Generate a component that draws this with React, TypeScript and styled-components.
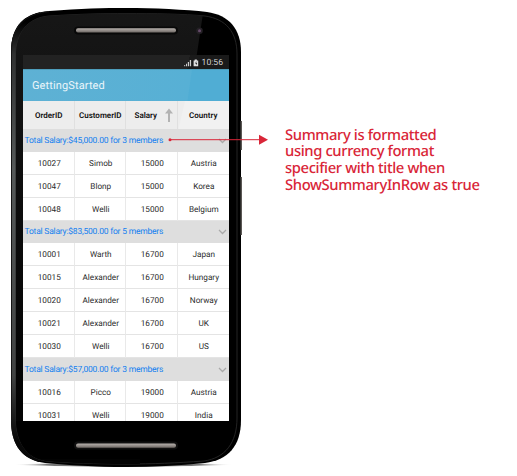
import React from "react";
import styled, { createGlobalStyle } from "styled-components";

const GlobalStyle = createGlobalStyle`
  * { box-sizing: border-box; }
  body { margin: 0; background: #fff; }
`;

const Page = styled.main`
  display: grid;
  grid-template-columns: 250px 1fr;
  width: 517px;
  height: 476px;
  overflow: hidden;
  background: #fff;
  position: relative;
  font-family: Roboto, "Liberation Sans", sans-serif;
  text-rendering: geometricPrecision;
`;

const Phone = styled.section`
  display: grid;
  height: 476px;
  & > * { grid-area: 1 / 1; }
`;

const Drawing = styled.svg`
  display: block;
  width: 250px;
  height: 476px;
`;

const Screen = styled.div`
  display: flex;
  flex-direction: column;
  width: 206px;
  height: 366px;
  margin: 55px 0 0 23px;
  overflow: hidden;
  background: #fff;
  z-index: 1;
`;

const StatusBar = styled.div`
  display: flex;
  flex: none;
  align-items: center;
  justify-content: flex-end;
  height: 14px;
  padding: 1px 6px 0 0;
  background: linear-gradient(100deg, #222 80%, #1a1a1a 80%);
  color: #d0d0d0;
  font-size: 8.6px;
  line-height: 14px;
`;

const StatusIcons = styled.svg`
  width: 15px;
  height: 8px;
  margin-right: 3px;
`;

const AppBar = styled.header`
  flex: none;
  height: 32px;
  padding-left: 9px;
  border-top: 1px solid #4d9dbb;
  background: linear-gradient(98deg, #5eb1d4 0%, #57b0d5 80%, #50add4 80.5%);
  color: #eaf5fa;
  font-size: 11px;
  letter-spacing: 0.12px;
  line-height: 31px;
`;

const HeaderRow = styled.div`
  display: grid;
  flex: none;
  grid-template-columns: repeat(4, 51.5px);
  height: 28px;
  background: linear-gradient(103deg, #ededed 76%, #f1f1f1 76.5%);
`;

const HeaderCell = styled.div<{ $sorted?: boolean }>`
  display: flex;
  align-items: center;
  justify-content: center;
  gap: 8px;
  padding-left: ${(p) => (p.$sorted ? "5px" : "1px")};
  border-right: 1px solid #e0e0e0;
  color: #111;
  font-size: 8px;
  font-weight: 600;
  &:last-child { border-right: 0; padding: 0; }
`;

const SortIcon = styled.svg`
  flex: none;
  width: 8px;
  height: 15px;
`;

const GroupRow = styled.div`
  display: flex;
  flex: none;
  align-items: center;
  justify-content: space-between;
  height: 22.9px;
  padding: 0.5px 2px 0 1.5px;
  background: #dedede;
  color: #147ff0;
  font-size: 8.5px;
  letter-spacing: -0.21px;
  white-space: nowrap;
`;

const Chevron = styled.svg`
  width: 9px;
  height: 6px;
`;

const DataRow = styled.div`
  display: grid;
  flex: none;
  grid-template-columns: repeat(4, 51.5px);
  height: 22.9px;
`;

const Cell = styled.div`
  display: flex;
  align-items: center;
  justify-content: center;
  padding: 2px 0 0 2px;
  border-right: 1px solid #e9e9e9;
  border-bottom: 1px solid #e4e4e4;
  color: #2b2b2b;
  font-size: 8.2px;
  &:last-child { padding-left: 1px; border-right: 0; }
`;

const Note = styled.aside`
  padding: 126.5px 0 0 35px;
  color: #d92638;
  font-family: "Noto Sans", "Open Sans", sans-serif;
  font-size: 14.8px;
  font-weight: 500;
  line-height: 16.67px;
  letter-spacing: -0.38px;
  white-space: nowrap;
`;

const Arrow = styled.svg`
  position: absolute;
  top: 134px;
  left: 166px;
  z-index: 2;
  width: 104px;
  height: 12px;
`;

const groups = [
  {
    total: "$45,000.00", members: 3,
    rows: [["10027", "Simob", "15000", "Austria"], ["10047", "Blonp", "15000", "Korea"], ["10048", "Welli", "15000", "Belgium"]],
  },
  {
    total: "$83,500.00", members: 5,
    rows: [["10001", "Warth", "16700", "Japan"], ["10015", "Alexander", "16700", "Hungary"], ["10020", "Alexander", "16700", "Norway"], ["10021", "Alexander", "16700", "UK"], ["10030", "Welli", "16700", "US"]],
  },
  {
    total: "$57,000.00", members: 3,
    rows: [["10016", "Picco", "19000", "Austria"], ["10031", "Welli", "19000", "India"]],
  },
];

const note = [
  "Summary is formatted",
  "using currency format",
  "specifier with title when",
  "ShowSummaryInRow as true",
];

const body = "M11 52 C11 25 25 13 49 11 C80 8.5 105 8 126 8 C153 8 186 9.5 207 12 C229 15 241 29 241 52 L241 420 C241 446 228 460 205 463 C178 465.5 153 467 126 467 C96 467 68 465 45 463 C22 460 11 445 11 420 Z";
const face = "M16 56 C16 33 27 18 49 16 C80 14 104 13.5 126 13.5 C153 13.5 184 14 205 16 C226 19 237 32 237 54 L237 418 C237 443 225 458 204 461 C176 463 153 464 126 464 C96 464 69 463 46 461 C27 458 16 443 16 418 Z";

function PhoneBody() {
  return (
    <Drawing viewBox="0 0 250 476" aria-hidden="true">
      <defs>
        <linearGradient id="edge" x1="0" y1="0" x2="0" y2="1">
          <stop offset=".03" stopColor="#000" />
          <stop offset=".1" stopColor="#303131" />
          <stop offset=".35" stopColor="#555959" />
          <stop offset=".8" stopColor="#414343" />
          <stop offset=".94" stopColor="#080808" />
        </linearGradient>
        <linearGradient id="sheen" x1="0" y1="0" x2="0" y2="1">
          <stop offset="0" stopColor="#171717" />
          <stop offset=".85" stopColor="#030303" />
        </linearGradient>
        <linearGradient id="metal" x1="0" y1="0" x2="0" y2="1">
          <stop offset="0" stopColor="#b9b3af" />
          <stop offset="1" stopColor="#706a66" />
        </linearGradient>
        <radialGradient id="shadow">
          <stop offset=".7" stopColor="#777" />
          <stop offset="1" stopColor="#fff" stopOpacity="0" />
        </radialGradient>
        <clipPath id="leftEdge"><rect x="0" y="0" width="40" height="476" /></clipPath>
        <clipPath id="glass"><path d={face} /></clipPath>
      </defs>
      <ellipse cx="123" cy="464.7" rx="110" ry="2.5" fill="url(#shadow)" />
      <path d={body} fill="#000" />
      <path d={body} fill="url(#edge)" clipPath="url(#leftEdge)" />
      <path d="M11.5 420 V52 C11.5 26 25 14 49 11.7" fill="none" stroke="#151515" />
      <path d={face} fill="#000" stroke="#282828" strokeWidth=".9" />
      <path d="M0 0 H205 L190 100 L140 425 V476 H0 Z" fill="url(#sheen)" clipPath="url(#glass)" />
      <rect x="16" y="421" width="150" height="38" fill="#000" clipPath="url(#glass)" />
      <rect x="240.5" y="121" width="1.5" height="29" fill="#5b5855" />
      <rect x="240.5" y="177" width="1.5" height="58" fill="#5b5855" />
      <rect x="74" y="26.5" width="104" height="8" rx="4" fill="#080808" />
      <rect x="76" y="28.2" width="100" height="4.3" rx="2" fill="url(#metal)" />
      <rect x="74" y="441.5" width="104" height="8" rx="4" fill="#101010" />
      <rect x="76" y="443.5" width="100" height="4.2" rx="2" fill="url(#metal)" />
      <circle cx="199.5" cy="30.7" r="3.3" fill="#242025" />
      <circle cx="199.5" cy="30.7" r="1.5" fill="#654a69" />
    </Drawing>
  );
}

export default function App() {
  return (
    <>
      <GlobalStyle />
      <Page>
        <Phone>
          <PhoneBody />
          <Screen>
            <StatusBar>
              <StatusIcons viewBox="0 0 15 8" aria-hidden="true">
                <path d="M.2 6h1v1.2h-1zM2 4.8h1v2.4H2zM3.8 3H5v4.2H3.8zM5.8 1h1.3v6.2H5.8z" fill="#ccc" />
                <path d="M10.7 .6h2.2v.8h1.3v5.9H9.6V1.4h1.1z" fill="#ddd" />
                <path d="M12.5 2.3 11 4.6h1v1.7l1.2-2.4h-1z" fill="#222" />
              </StatusIcons>
              10:56
            </StatusBar>
            <AppBar>GettingStarted</AppBar>
            <HeaderRow>
              <HeaderCell>OrderID</HeaderCell>
              <HeaderCell>CustomerID</HeaderCell>
              <HeaderCell $sorted>
                Salary
                <SortIcon viewBox="0 0 8 15" aria-hidden="true">
                  <path d="M4 .5 8 5.5H5V14H3V5.5H0Z" fill="#b3b3b3" />
                </SortIcon>
              </HeaderCell>
              <HeaderCell>Country</HeaderCell>
            </HeaderRow>
            {groups.map((g) => (
              <React.Fragment key={g.total}>
                <GroupRow>
                  <span>Total Salary:{g.total} for {g.members} members</span>
                  <Chevron viewBox="0 0 9 6" aria-hidden="true">
                    <path d="M1 1 4.5 4.5 8 1" fill="none" stroke="#aaa" strokeWidth="1.3" />
                  </Chevron>
                </GroupRow>
                {g.rows.map((row) => (
                  <DataRow key={row[0]}>
                    {row.map((value) => <Cell key={value}>{value}</Cell>)}
                  </DataRow>
                ))}
              </React.Fragment>
            ))}
          </Screen>
        </Phone>
        <Note>
          {note.map((line) => <div key={line}>{line}</div>)}
        </Note>
        <Arrow viewBox="0 0 104 12" aria-hidden="true">
          <circle cx="4" cy="5.7" r="1.5" fill="#d92638" />
          <path d="M4 5.7H94" stroke="#d92638" strokeWidth="1" />
          <path d="M93 .7 102 5.7 93 10.7Z" fill="#d92638" />
        </Arrow>
      </Page>
    </>
  );
}
